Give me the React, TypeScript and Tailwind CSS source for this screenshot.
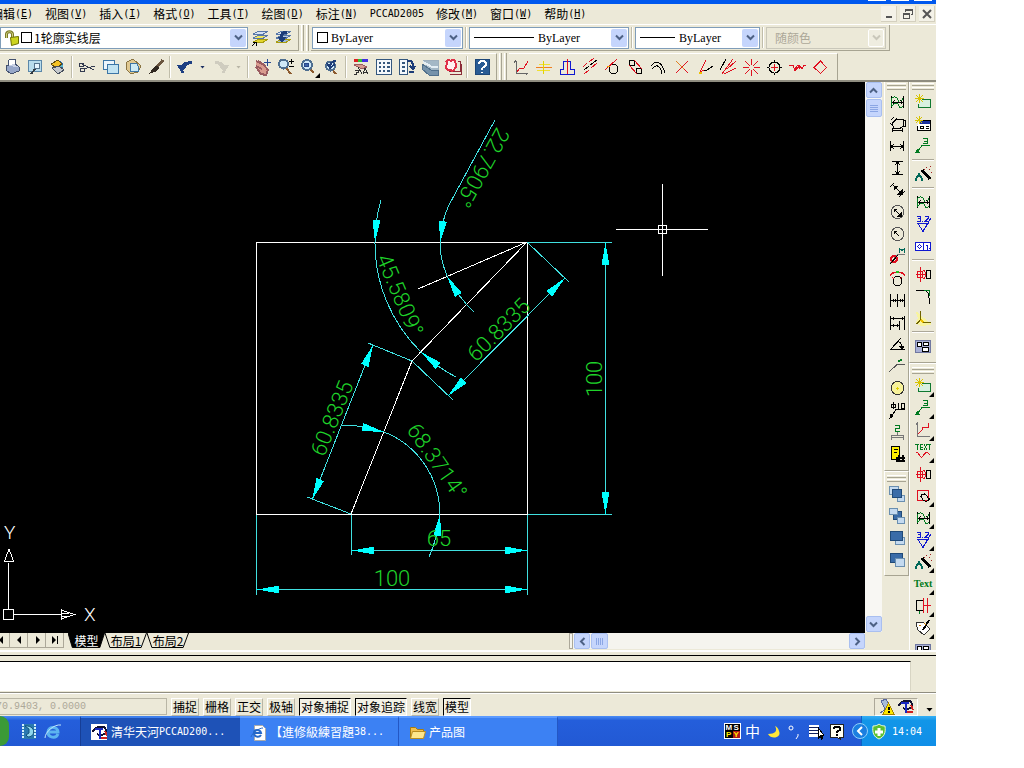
import { useState } from "react";
import type { ReactNode } from "react";

// one stroke or shape of a toolbar icon: path data, stroke, fill, stroke width
type Shape = [d: string, stroke: string, fill?: string, width?: number];

interface Tool {
    name: string;
    shapes: Shape[];
    flyout?: boolean;
}

const K = "#000000";
const R = "#e01020";
const G = "#007a20";
const B = "#1018d0";
const N = "#1c3c78";

const tool = (name: string, shapes: Shape[], flyout = false): Tool => ({ name, shapes, flyout });

const surfaceTol: Shape[] = [
    ["M3.500 3v12M15.500 3v12", K],
    ["M3.500 14V6c1-3 5-3 6 0s2 4 4 3l1-4M4 13c3-4 6-3 7 0s3 2 4 0", G],
    ["M4 9.500h11M6.500 7.500l-2 2 2 2M12.500 7.500l2 2-2 2", K],
];
const roughness: Shape[] = [["M3 8.500h11L9 16.500 4 8.500M9 16l8-13", B], ["M3 1.500h3v2h-2h2v3h-3M8.500 6v1M11 1.500h3v2l-3 3h3", B]];
const leader: Shape[] = [["M3 15l5-6.500h8", G], ["M9 1.500h4v5h-4M10 4h3", G, undefined, 1], ["M2 15l2-3 1 3z", G, G]];
const wand: Shape[] = [
    ["M8 5l8 9", K, undefined, 3],
    ["M5 8v3M5 9l-3 5M5 9l3 5M2 14v2M8 14v2", "#006858", undefined, 2],
    ["M12 2v1M15 4h1M16 1v1M10 4h1M17 7v1", "#a02020"],
];
const partBox: Shape[] = [
    ["M7.500 6.500h9v8h-12v-4", "#107830", "#d8f0e0"],
    ["M5.500 1v9M1 5.500h9M2 2l7 7M9 2l-7 7", "#d8c400"],
];
const hole: Shape[] = [["M2 9.500h9", R], ["M3.500 6.500h5v6h-5zM6.500 2v15", R], ["M9 5c3 0 3 9 0 9", R], ["M12.500 5.500h4v8h-4z", K]];
const layerIcon = (a: string, b: string): Shape[] => [
    ["M2 13l6-3h9l-6 4z", "#a89c10", a],
    ["M2 9l6-3h9l-6 4z", "#5878a8", b],
    ["M2 5l6-3h9l-6 4z", "#5878a8", "#d6e2f4"],
];
const viewport: Shape[] = [["M1.500 3.500h15v12h-15z", "#7078a0", "#a9b0d6"], ["M3.500 5.500h4v4h-4zM9.500 5.500h5v3h-5zM8.500 10.500h6v4h-6z", K, "#fff"]];

const fileTools = [
    tool("打印", [["M3 8l8-3 5 4-8 4z", "#44526f", "#c7d0e4"], ["M5 7l1-5 6-1 1 5", "#44526f", "#fff"], ["M3 8v4l5 4 8-3v-4", "#44526f", "#97a7c8"]]),
    tool("打印预览", [["M2.500 2.500h13v11h-13z", "#5b87a9", "#b9dcec"], ["M9 11l-4 5", "#303840", undefined, 2], ["M8 8a3 3 0 1 0 6 0a3 3 0 1 0-6 0", "#56748e", "#e6f5ff"]]),
    tool("发布", [["M8 3a5 5 0 1 1 2 10", "#2868a8", "#58b4cc"], ["M2 6l7-4 4 4-6 4z", "#5e4a10", "#f4c224"], ["M3 10l7-2 5 4-6 4z", "#444c5a", "#c4c8cc"]]),
];

const editTools = [
    tool("剪切", [["M17 8L5 11M16 12L4 6", "#333b50"], ["M1.500 5.500h4v3h-4zM2.500 10.500h4v3h-4z", "#333b50"]]),
    tool("复制", [["M2.500 2.500h11v9h-11z", "#3d76a6", "#edf6fc"], ["M6.500 6.500h11v9h-11z", "#3d76a6", "#c3e4f2"]]),
    tool("粘贴", [["M3 4l6-3 8 7-3 6-7 2-5-5z", "#8a7442", "#e0c890"], ["M6.500 5.500h6l2 3v5h-8z", "#3d76a6", "#cdeaf4"]]),
    tool("特性匹配", [["M16 2l-6 7", "#6b5640", undefined, 3], ["M10 8l-3 2-4 5 6-2 3-3z", "#302820", "#302820"]]),
];

const zoomTools = [
    tool("实时平移", [["M2 3l8 4 4 5-2 5-5-1-5-7M4 3l6 4M2 8l6 3", "#9a5c60", "#d99b8e", 2], ["M13.500 1v7M10 4.500h7", "#294a94"]]),
    tool("实时缩放", [["M9 10l5 6", "#8c5a2e", undefined, 2], ["M2 6a4 4 0 1 0 9 0a4 4 0 1 0-9 0", "#4e6e90", "#cfe8f8", 2], ["M14.500 1v5M12 3.500h5M12 8.500h5", K]]),
    tool("窗口缩放", [["M9 10l5 5", "#8c5a2e", undefined, 2], ["M2 7a5 5 0 1 0 10 0a5 5 0 1 0-10 0", "#4e6e90", "#cfe8f8", 2], ["M4.500 5.500h4v3h-4z", "#28488a", "#3c63a8"]], true),
    tool("缩放上一个", [["M8 10l5 6", "#8c5a2e", undefined, 2], ["M3 8a4 4 0 1 0 9 0a4 4 0 1 0-9 0", "#4e6e90", "#cfe8f8", 2], ["M7 11c-1-5 2-8 6-8M4 5l3 5 5-4", N, undefined, 2]]),
];

const paletteTools = [
    tool("对象特性", [["M2 2.500h4", "#e02020", undefined, 3], ["M6 2.500h4", "#30c030", undefined, 3], ["M10 2.500h6", "#4030e0", undefined, 3], ["M2 7l7-1 6 3-5 2z", "#9a5c60", "#d99b8e"], ["M3 12h3v2h-2v2h-2M11 16l2-6 3 6M12 14h3M6 9l4 7", "#303030"]]),
    tool("设计中心", [["M1.500 1.500h15v15h-15z", "#34577e", "#f4f8fc"], ["M4 5h2M4 9h2M4 13h2M8 5h2M8 9h2M8 13h2M12 5h3M12 9h3M12 13h3", "#34577e", undefined, 2]]),
    tool("工具选项板", [["M1.500 1.500h8v15h-8z", "#34577e", "#f4f8fc"], ["M4 5h3M4 9h3M4 13h3", "#34577e", undefined, 2], ["M9 3h3c3 0 3 3 3 7M12 8l3 3 2-3M11 14h5", N, undefined, 2]]),
    tool("图纸集", [["M2 2h15v13H9z", "#9dafbd", "#a4b8c6"], ["M1 6l9 6h7v5H8l-7-6z", "#50708c", "#7592aa"], ["M2 4l9 5h6", "#e4eef4", undefined, 2]]),
    tool("标记集", [["M14 3.500h2.500v10H5", "#8b2c38"], ["M17.500 6v10.500H6", "#8b2c38"], ["M2.500 3.500c2-3 4 0 5-1s4-1 4 2 2 3 0 5-1 4-4 3-4 1-5-2 1-3 0-7z", "#e03048", "#fff0f0", 2]]),
];

const helpTools = [
    tool("帮助", [["M2.500 1.500h14v15h-14z", "#1d4778", "#2a5c94"], ["M6 6c0-4 7-4 7 0 0 3-4 2-4 6M9 14v1", "#fff", undefined, 2]]),
];

const drawTools = [
    tool("坐标线", [["M4.500 3v12h11M2 5l2-3M16 15l-2 2", "#666"], ["M5 14l3-4h4l3-5v-2", R]]),
    tool("中心线", [["M4 6.500h11M2 12.500h13", "#f0e030"], ["M1 9.500h16", "#f08020"], ["M8.500 3v13", "#e4d400"]]),
    tool("对称线", [["M5.500 11V3.500h7V11h4v5.500h-14V11z", B], ["M9.500 1v15", R]]),
    tool("平行线", [["M2 9l4-4M8 4l5-4M3 16l5-4M10 10l6-5", R], ["M3 12l5-4M9 7l7-5", K]]),
    tool("切线", [["M5 11a4 4 0 1 0 9 0a4 4 0 1 0-9 0", K], ["M1 12L13 1", R], ["M3 8.500h3", "#f0a000"]]),
    tool("公切线", [["M2 5a3 3 0 1 0 6 0a3 3 0 1 0-6 0M9 13a3 3 0 1 0 6 0a3 3 0 1 0-6 0", K], ["M7 2l8 9M2 7l8 9", R]]),
    tool("圆弧", [["M1 8c5-7 11-4 14 7", K], ["M2 11c4-6 9-3 10 5", K]]),
    tool("剪断", [["M3 3l12 12", "#e08020"], ["M15 3L3 15M11 11l4 4", R]]),
    tool("角分线", [["M4 14L10 2", R], ["M4 14l4-2", R], ["M8 12h3l6-4", K], ["M3 15h3", "#f0c000", undefined, 2]]),
    tool("三分线", [["M1 12L7 1", K], ["M3 16L14 1M5 16l12-6M8 11L17 3", R]]),
    tool("星形线", [["M9.500 1v6M9.500 12v6M1 9.500h6M12 9.500h6M3 3l5 5M11 11l5 5M16 3l-5 5M8 11l-5 5", R]]),
    tool("圆孔", [["M4 9.500a5 5 0 1 0 11 0a5 5 0 1 0-11 0", K], ["M9.500 6v7M6 9.500h7", R], ["M9.500 2v2M9.500 15v2M2 9.500h2M15 9.500h2", K]]),
    tool("波浪线", [["M1 7.500h4l2 5 3-3h2", R], ["M7 11l3-4 2 4M11 7l3 4 2-3.500h2", R]]),
    tool("多边形", [["M9.500 3l6 6.500-6 6-6.500-6z", R]]),
];

const dimTools = [
    tool("智能标注", surfaceTol),
    tool("尺寸标注", [["M4.500 8l4-4 7 1v6l-3 2h-7z", K], ["M3 5l3-3M2 8l3 3M4.500 15.500h9M4.500 13v4M14.500 13v4M15.500 5.500h2M15.500 11.500h2M17.500 6v5", K]]),
    tool("线性标注", [["M2.500 4v10M15.500 4v10M3 9.500h12M6 7L3 9.500 6 12M12 7l3 2.500-3 2.500", K]]),
    tool("垂直标注", [["M4 2.500h11M4 15.500h11M9.500 3v12M7 6l2.500-3L12 6M7 12l2.500 3 2.500-3", K]]),
    tool("对齐标注", [["M5 4l9 9M2 6l4-4M11 16l6-6", K], ["M6 9V5h4zM14 9v4h-4z", K, K]]),
    tool("直径标注", [["M3 9a6 6 0 1 0 13 0a6 6 0 1 0-13 0", "#555"], ["M6 6l7 7", K], ["M6 9V6h3zM13 10v3h-3z", K, K]]),
    tool("半径标注", [["M3 9a6 6 0 1 0 13 0a6 6 0 1 0-13 0", "#555"], ["M6 6l5 5", K], ["M6 9V6h3z", K, K]]),
    tool("螺纹标注", [["M11.500 6V1.500l2.500 2 2.500-2v4.500", "#006858"], ["M2 16L10 7.500h7", "#777"], ["M3 12a3 3 0 1 0 6 0a3 3 0 1 0-6 0", R, undefined, 2], ["M2 17l8-9", K]]),
    tool("弧长标注", [["M5 12a4 4 0 1 0 9 0a4 4 0 1 0-9 0", K], ["M2 7c3-5 12-5 15 0M2 7l3-4M17 7l-3-4M4 8l2 2M14 8l-2 2", R], ["M8 3h3", "#20c020", undefined, 2]]),
    tool("连续标注", [["M2.500 3v13M9.500 3v13M16.500 3v13M2 9.500h15M5.500 8v3M7.500 8v3M12.500 8v3M14.500 8v3", K]]),
    tool("基线标注", [["M2.500 3v14M16.500 3v14M3 5.500h13M5.500 4v3M14.500 4v3M11.500 8v9M3 12.500h8M5.500 11v3M9.500 11v3", K]]),
    tool("角度标注", [["M2 14.500h15M3 14L13 3", K], ["M9 6c3 1 5 3 5 6", K], ["M11 11h5l-2 3z", K, K]]),
    tool("引线标注", [["M1 15L9 7.500h8", "#555"], ["M10 4l4-1", G, undefined, 2]]),
    tool("圆心标记", [["M3 9a6 6 0 1 0 13 0a6 6 0 1 0-13 0", "#333", "#f7f29a"], ["M8 9.500h3M9.500 8v3", "#e0d000"]]),
    tool("孔标注", [["M3 16l5-7.500h9", K], ["M3.500 3.500h4v3h-4zM5.500 1v7M10.500 2v6M13.500 2.500h3v5h-3z", K], ["M2 17l1-4 2 2z", K, K]]),
    tool("序号", [["M7 2.500h4.500v3h-4v3h4", G], ["M3.500 17v-4.500h12v4.500M9.500 9v3M3 14.500h13", "#777"]]),
    tool("明细表", [["M3.500 1.500h8v13h-8z", K, "#ffee00"], ["M6 4.500h4M6 7.500h3", K], ["M8 13h9M8 16h9M11 10v6M15 10v6", K, undefined, 2]]),
];

const orderTools = [
    tool("前置", [["M1.500 1.500h9v8h-9zM9.500 10.500h7v6h-7z", "#6a8fb0", "#c4daf0"], ["M4.500 4.500h9v8h-9z", "#204a78", "#3a6ca8"]]),
    tool("后置", [["M5.500 4.500h8v8h-8z", "#204a78", "#3a6ca8"], ["M1.500 1.500h8v6h-8zM9.500 10.500h7v6h-7z", "#6a8fb0", "#c4daf0"]]),
    tool("置于对象之上", [["M7.500 8.500h9v7h-9z", "#6a8fb0", "#c4daf0"], ["M2.500 2.500h12v9h-12z", "#204a78", "#3a6ca8"]]),
    tool("置于对象之下", [["M2.500 2.500h12v9h-12z", "#204a78", "#3a6ca8"], ["M7.500 7.500h9v8h-9z", "#6a8fb0", "#c4daf0"]]),
];

const partGroups: Tool[][] = [
    [
        tool("插入零件", partBox),
        tool("图纸标题", [["M5.500 5.500h11v10h-13v-5", K, "#fff"], ["M6 7.500h10", "#1830a0", undefined, 3], ["M6.500 11.500h3v2h-3zM12 11.500h3M12 13.500h3", K], ["M5.500 1v8M1 5.500h8M2 2l6 6M8 2l-6 6", "#d8c400"]]),
        tool("引出说明", leader),
    ],
    [tool("向导", wand)],
    [
        tool("公差", surfaceTol),
        tool("粗糙度", roughness),
        tool("形位公差", [["M1.500 5.500h15v8h-15zM9.500 5.500v8", B, "#fff"], ["M3.500 9.500l2-2 2 2-2 2zM12 8.500h1.500v4M15.500 11v1", B]]),
    ],
    [
        tool("孔轴", hole),
        tool("倒圆", [["M2 3.500h7c4 0 6 3 6 7v6", K], ["M10 3.500h5.500v5", G]]),
        tool("倒角", [["M3 3l2 6-2 5 4 2 10-1", "#f8f4a0", "#f8f4a0", 2], ["M6.500 2v9l-4 4M9 13.500h8", "#706400"], ["M6.500 11l3 2", "#f0c000", undefined, 2]]),
    ],
    [tool("视口", viewport)],
];

const drawGroup = [
    tool("零件库", partBox, true),
    tool("引线", leader, true),
    tool("曲线", [["M3.500 2v13.500h12M2 4l2-3", "#777"], ["M4 13l4-4v-2.500h6.500V2", R]], true),
    tool("文本样条", [["M1 1.500h4M3.500 1.500v5M6.500 1.500v5M6 1.500h3M6 4.500h3M6 6.500h3M10 1l3 6M13 1l-3 6M13 1.500h4M15.500 1.500v5", G], ["M2 10c3-2 4 7 7 3s3-5 7-1", R]], true),
    tool("孔", hole),
    tool("剪裁", [["M3.500 3.500h11v10h-11z", R], ["M8 9a4 4 0 1 0 8 2M6 10c3-5 7-4 9 4", K]], true),
    tool("曲面公差", surfaceTol, true),
    tool("表面粗糙度", roughness, true),
    tool("自动向导", wand, true),
];

const drawGroupTail = [
    tool("机构", [["M2.500 3.500h7v10h-7z", K], ["M9.500 1v15M13.500 1v15M9 8.500h8", R], ["M5.500 14v3", G]], true),
    tool("标记", [["M2 4l7-1 7 7-6 6-6-5z", "#333", "#fff"], ["M15 1l-6 10", K, undefined, 2], ["M5 6.500h2M10.500 4l1 2", "#d08000"]], true),
    tool("窗口视图", viewport, true),
];

const Icon = ({ shapes, size = 18 }: { shapes: Shape[]; size?: number }) => (
    <svg width={size} height={size} viewBox={`0 0 ${size} ${size}`} fill="none" shapeRendering="crispEdges" aria-hidden="true">
        {shapes.map(([d, stroke, fill, width], i) => (
            <path key={i} d={d} stroke={stroke} fill={fill ?? "none"} strokeWidth={width ?? 1} />
        ))}
    </svg>
);

const Flyout = () => <span className="absolute right-0 bottom-0 h-[5px] w-[5px] bg-black [clip-path:polygon(100%_0,100%_100%,0_100%)]" />;

const ToolButton = ({ item, tall = false }: { item: Tool; tall?: boolean }) => (
    <button
        aria-label={item.name}
        title={item.name}
        className={`relative flex h-[22px] shrink-0 items-center justify-center ${tall ? "w-[22px]" : "w-[23px]"}`}
    >
        <Icon shapes={item.shapes} />
        {item.flyout && <Flyout />}
    </button>
);

const Mono = ({ children }: { children: ReactNode }) => (
    <span className="font-['DejaVu_Sans_Mono',monospace] text-[10px]">{children}</span>
);

const Bar = () => (
    <span className="flex w-[6px] shrink-0 justify-center self-stretch py-[2px]">
        <span className="w-[2px] border-r border-l border-r-white border-l-[#c0bdaa]" />
    </span>
);

const Grip = () => (
    <span className="flex w-[12px] shrink-0 justify-center gap-[2px] self-stretch">
        <span className="w-[3px] border-r border-l border-r-[#a7a492] border-l-white" />
        <span className="w-[3px] border-r border-l border-r-[#a7a492] border-l-white" />
    </span>
);

const SideGrip = () => (
    <span className="flex h-[9px] shrink-0 flex-col justify-center gap-[1px] self-stretch px-[2px]">
        <span className="h-[3px] border-t border-b border-t-white border-b-[#a7a492]" />
        <span className="h-[3px] border-t border-b border-t-white border-b-[#a7a492]" />
    </span>
);

const SideRule = () => (
    <span className="flex h-[6px] shrink-0 flex-col justify-center self-stretch px-[2px]">
        <span className="h-[2px] border-t border-b border-t-[#aca899] border-b-white" />
    </span>
);

const Chevron = ({ className }: { className: string }) => (
    <svg viewBox="0 0 9 9" width="9" height="9" className={className} fill="none" aria-hidden="true">
        <path d="M1 2.500l3.500 3.500L8 2.500" stroke="currentColor" strokeWidth="2" />
    </svg>
);

function Combo({ label, options, width, lead, disabled }: { label: string; options: string[]; width: string; lead?: ReactNode; disabled?: boolean }) {
    return (
        <div className={`relative flex h-[22px] shrink-0 items-center gap-[2px] border pl-[4px] ${disabled ? "border-[#c9c7ba] bg-[#ece9d8]" : "border-[#7f9db9] bg-white"} ${width}`}>
            {lead}
            <select
                aria-label={label}
                disabled={disabled}
                className={`h-full min-w-0 flex-1 appearance-none bg-transparent text-[12px] outline-none ${disabled ? "text-[#aca899]" : ""} ${options[0] === "ByLayer" ? "font-['Liberation_Serif',serif]" : ""}`}
            >
                {options.map(o => <option key={o}>{o}</option>)}
            </select>
            <span className={`pointer-events-none mr-[1px] flex h-[18px] w-[16px] shrink-0 items-center justify-center rounded-[2px] ${disabled ? "border border-white bg-[#efede0] text-[#c9c7ba]" : "bg-[#c5d5fc] text-[#4d6185]"}`}>
                <Chevron className="" />
            </span>
        </div>
    );
}

const menus: [string, string][] = [
    ["编辑", "E"],
    ["视图", "V"],
    ["插入", "I"],
    ["格式", "O"],
    ["工具", "T"],
    ["绘图", "D"],
    ["标注", "N"],
    ["PCCAD2005", ""],
    ["修改", "M"],
    ["窗口", "W"],
    ["帮助", "H"],
];

function MenuBar() {
    return (
        <div className="flex h-[20px] shrink-0 items-center justify-between overflow-hidden">
            <nav className="-ml-[9px] flex gap-[12px]">
                {menus.map(([name, key]) => (
                    <button key={name} className="flex items-center whitespace-nowrap">
                        {key ? <span>{name}</span> : <Mono>{name}</Mono>}
                        {key && <Mono>(<u>{key}</u>)</Mono>}
                    </button>
                ))}
            </nav>
            <div className="flex gap-[3px] pr-[1px]">
                <button aria-label="最小化" className="flex h-[16px] w-[16px] items-end justify-center border-r border-b border-[#d4d0bf] bg-[#f4f2e8] pb-[3px]">
                    <span className="h-[2px] w-[6px] bg-[#555]" />
                </button>
                <button aria-label="还原" className="flex h-[16px] w-[16px] items-center justify-center border-r border-b border-[#d4d0bf] bg-[#f4f2e8]">
                    <svg width="10" height="10" fill="none" stroke="#555" shapeRendering="crispEdges"><path d="M2.500 3V0.500h7v5H8M2 1.500h7M0.500 4.500h6v5h-6zM1 5.500h6" /></svg>
                </button>
                <button aria-label="关闭" className="flex h-[16px] w-[16px] items-center justify-center border-r border-b border-[#d4d0bf] bg-[#f4f2e8]">
                    <svg width="10" height="10" fill="none" stroke="#555" strokeWidth="2"><path d="M1 1l8 8M9 1L1 9" /></svg>
                </button>
            </div>
        </div>
    );
}

function PropertyBar() {
    return (
        <div className="flex h-[27px] shrink-0 items-stretch border-t border-white">
            <div className="flex items-center border-r border-b border-[#a7a492] pr-[4px]">
                <Combo
                    label="图层"
                    options={["1轮廓实线层"]}
                    width="w-[248px]"
                    lead={
                        <>
                            <svg width="15" height="16" viewBox="0 0 15 16" fill="none" aria-hidden="true">
                                <path d="M1.500 8V4C2 1 7 1 7.500 4V7" stroke="#7d7c28" strokeWidth="3" />
                                <path d="M1.500 8V4C2 1 7 1 7.500 4V7" stroke="#d0d080" />
                                <path d="M5.500 7.500l8-1v7l-7 2z" stroke="#6d7000" fill="#cdd420" />
                            </svg>
                            <span className="-ml-[1px] h-[11px] w-[11px] border border-black" />
                        </>
                    }
                />
                <ToolButton item={tool("图层特性管理器", [...layerIcon("#e4d62c", "#f0e860"), ["M1 17l4-4M2 13.500h3v3", K]])} />
                <ToolButton item={tool("上一个图层", [...layerIcon("#9cb8d8", "#b8cce4"), ["M8 11c-2-5 0-8 5-8", N, undefined, 3], ["M4 8h8l-4 5z", N, N]])} />
            </div>
            <Grip />
            <div className="flex flex-1 items-center">
                <div className="flex h-full items-center border-r border-b border-[#a7a492] pr-[3px] pl-[1px]">
                    <Combo label="颜色" options={["ByLayer"]} width="w-[151px]" lead={<span className="mr-[1px] h-[11px] w-[11px] border border-black" />} />
                    <Bar />
                    <Combo label="线型" options={["ByLayer"]} width="w-[160px]" lead={<span className="mr-[2px] h-px w-[60px] bg-black" />} />
                    <Bar />
                    <Combo label="线宽" options={["ByLayer"]} width="w-[125px]" lead={<span className="mr-[2px] h-px w-[35px] bg-black" />} />
                    <Bar />
                    <Combo label="打印样式" options={["随颜色"]} width="w-[120px]" disabled lead={<span className="w-[2px]" />} />
                </div>
            </div>
        </div>
    );
}

function StandardBar() {
    return (
        <div className="flex h-[31px] shrink-0 items-stretch overflow-hidden border-b-2 border-b-[#8f8d80] pt-[2px]">
            <div className="flex items-center border-t border-r border-t-white border-r-[#a7a492] pr-[3px]">
                {fileTools.map(t => <ToolButton key={t.name} item={t} />)}
                <Bar />
                {editTools.map(t => <ToolButton key={t.name} item={t} />)}
                <Bar />
                <ToolButton item={tool("放弃", [["M7 15c-4-6 1-11 9-10", "#1d3f82", undefined, 3], ["M1 7h10l-5 6z", "#1d3f82", "#1d3f82"]])} />
                <button aria-label="放弃列表" className="flex w-[13px] justify-center"><span className="h-[3px] w-[5px] bg-[#1d2f62] [clip-path:polygon(0_0,100%_0,50%_100%)]" /></button>
                <ToolButton item={tool("重做", [["M11 15c4-6-1-11-8-10", "#cfccbf", undefined, 3], ["M17 7h-10l5 6z", "#cfccbf", "#cfccbf"]])} />
                <button aria-label="重做列表" className="flex w-[13px] justify-center"><span className="h-[3px] w-[5px] bg-[#b8b5a6] [clip-path:polygon(0_0,100%_0,50%_100%)]" /></button>
                <Bar />
                {zoomTools.map(t => <ToolButton key={t.name} item={t} />)}
                <Bar />
                {paletteTools.map(t => <ToolButton key={t.name} item={t} />)}
                <Bar />
                {helpTools.map(t => <ToolButton key={t.name} item={t} />)}
            </div>
            <Grip />
            <div className="flex items-center border-t border-r border-t-white border-r-[#a7a492] pr-[6px]">
                {drawTools.map(t => <ToolButton key={t.name} item={t} />)}
            </div>
        </div>
    );
}

// arrowhead pointing along +x, turned to the given angle
const Arrow = ({ x, y, a }: { x: number; y: number; a: number }) => (
    <path d="M0 0L-22 -4V4z" fill="#00ffff" transform={`translate(${x} ${y}) rotate(${a})`} />
);

const Dim = ({ x, y, a = 0, start = false, children }: { x: number; y: number; a?: number; start?: boolean; children: ReactNode }) => (
    <text transform={`translate(${x} ${y}) rotate(${a})`} textAnchor={start ? "start" : "middle"} fill="#1fd32a" fontSize="22" fontWeight="300" fontFamily="Roboto, sans-serif">
        {children}
    </text>
);

function Drawing() {
    return (
        <svg className="block h-full w-full bg-black" role="img" aria-label="图形" shapeRendering="crispEdges">
            <g transform="translate(0 -82)" fill="none">
                <g stroke="#ffffff">
                    <path d="M256.500 242.500H527.500V514.500H256.500z" />
                    <path d="M527 242L412 361L351 514M527 242L418 289" />
                    <path d="M616 229.500H708M662.500 184V276M658.500 225.500h8v8h-8z" />
                    <path d="M3.500 609.500h10v10h-10zM14 614.500H61M8.500 563V609" />
                    <path d="M61.500 610v9l13-4.500zM4.500 561h9l-4.500-12zM61 613h8M61 616h8" />
                </g>
                <g stroke="#40e0e0">
                    <path d="M528 242.500H612M528 514.500H612M605.500 243V514" />
                    <path d="M256.500 515V595M527.500 515V595M257 589.500H527" />
                    <path d="M351.500 515V555M352 550.500H527" />
                    <path d="M351 514L307 497M412 361L368 343M312 500L373 345" />
                    <path d="M412 361L453 400M527 242L569 282M448 396L565 278" />
                    <path d="M342 425Q364 425 384 432A88 88 0 0 1 440 514Q437 540 429 557" />
                    <path d="M381 200Q375 221 375 242A152 152 0 0 0 421 352Q438 368 456 377" />
                    <path d="M495 120L449 205Q441 222 440 242A87 87 0 0 0 447 276Q458 297 474 312" />
                </g>
                <Arrow x={605.5} y={243} a={-90} />
                <Arrow x={605.5} y={514} a={90} />
                <Arrow x={257} y={589.5} a={180} />
                <Arrow x={527} y={589.5} a={0} />
                <Arrow x={352} y={550.5} a={180} />
                <Arrow x={527} y={550.5} a={0} />
                <Arrow x={312} y={500} a={112} />
                <Arrow x={373} y={345} a={-68} />
                <Arrow x={448} y={396} a={135} />
                <Arrow x={565} y={278} a={-45} />
                <Arrow x={384} y={432} a={13} />
                <Arrow x={440} y={514} a={-83} />
                <Arrow x={375} y={242} a={94} />
                <Arrow x={421} y={352} a={-141} />
                <Arrow x={440} y={243} a={98} />
                <Arrow x={447} y={276} a={-121} />
                <Dim x={497} y={126} a={119} start>22.7905°</Dim>
                <Dim x={376} y={258} a={67} start>45.5809°</Dim>
                <Dim x={406} y={430} a={55} start>68.3714°</Dim>
                <Dim x={339} y={421} a={-68}>60.8335</Dim>
                <Dim x={504} y={335} a={-45}>60.8335</Dim>
                <Dim x={602} y={379} a={-90}>100</Dim>
                <Dim x={439} y={546}>65</Dim>
                <Dim x={392} y={586}>100</Dim>
                <g fill="#ffffff" fontSize="19" fontWeight="300" fontFamily="Roboto, sans-serif">
                    <text x="84" y="621">X</text>
                    <text x="4" y="539">Y</text>
                </g>
            </g>
        </svg>
    );
}

const ScrollButton = ({ label, turn }: { label: string; turn: string }) => (
    <button aria-label={label} className="flex h-[16px] w-[16px] shrink-0 items-center justify-center rounded-[2px] border border-[#a9bff0] bg-[#c5d5fc] text-[#4d6185]">
        <Chevron className={turn} />
    </button>
);

function SheetTabs() {
    const [active, setActive] = useState("模型");
    return (
        <div className="flex h-[17px] shrink-0 items-start">
            <div className="flex h-[15px] w-[64px]">
                {["M3 1v8L-1 5z", "M7 1v8L3 5z", "M4 1v8l4-4z", "M2 1v8l4-4zM7 1h1v8H7z"].map((d, i) => (
                    <button key={d} aria-label={["第一页", "上一页", "下一页", "最后一页"][i]} className={`flex items-center justify-center border-r border-b border-[#aca899] ${i === 0 ? "w-[10px]" : "w-[18px]"}`}>
                        <svg width="10" height="10"><path d={d} /></svg>
                    </button>
                ))}
            </div>
            <div role="tablist" className="ml-[4px] flex">
                {["模型", "布局1", "布局2"].map(name => (
                    <button
                        key={name}
                        role="tab"
                        aria-selected={active === name}
                        onClick={() => setActive(name)}
                        className={`relative flex h-[15px] items-center justify-center text-[12px] leading-[15px] ${name === "模型" ? "w-[37px]" : "w-[42px]"} ${active === name ? "text-white" : "text-black"}`}
                    >
                        <svg className="absolute inset-0 h-full w-full" viewBox="0 0 43 15" preserveAspectRatio="none" aria-hidden="true">
                            <path d="M0 0l5 14.500h32L42.500 0" stroke="#000" fill={active === name ? "#000" : "#ece9d8"} />
                        </svg>
                        <span className="relative">{name}</span>
                    </button>
                ))}
            </div>
            <div className="ml-auto flex h-[16px] w-[296px] bg-[#f5f4ee]">
                <span className="mr-[1px] w-[4px] border border-[#aca899]" />
                <ScrollButton label="向左滚动" turn="rotate-90" />
                <span className="ml-[1px] flex w-[17px] items-center justify-center gap-[1px] rounded-[2px] border border-[#a9bff0] bg-[#c5d5fc]">
                    {[0, 1, 2, 3].map(i => <span key={i} className="h-[7px] w-px bg-[#8ba6e4]" />)}
                </span>
                <span className="flex-1" />
                <ScrollButton label="向右滚动" turn="-rotate-90" />
            </div>
        </div>
    );
}

function SideBars() {
    return (
        <>
            <div className="flex w-[25px] shrink-0 flex-col">
                <div className="flex flex-col items-center border-r border-b border-l border-r-[#a7a492] border-b-[#a7a492] border-l-white pb-[5px]">
                    <SideGrip />
                    {dimTools.map(t => <ToolButton key={t.name} item={t} tall />)}
                </div>
                <div className="flex flex-col items-center border-t border-r border-b border-l border-t-white border-r-[#a7a492] border-b-[#a7a492] border-l-white pt-[2px] pb-[4px]">
                    <SideGrip />
                    {orderTools.map(t => <ToolButton key={t.name} item={t} tall />)}
                </div>
            </div>
            <div className="flex w-[27px] shrink-0 flex-col overflow-hidden">
                <div className="flex flex-col items-center border-b border-l border-b-[#a7a492] border-l-white pb-[5px]">
                    <SideGrip />
                    {partGroups.map((group, i) => (
                        <div key={i} className="flex flex-col items-center self-stretch">
                            {i > 0 && <SideRule />}
                            {group.map(t => <ToolButton key={t.name} item={t} tall />)}
                        </div>
                    ))}
                </div>
                <div className="flex flex-col items-center border-t border-l border-white pt-[2px]">
                    <SideGrip />
                    {drawGroup.map(t => <ToolButton key={t.name} item={t} tall />)}
                    <button className="relative flex h-[22px] w-[22px] items-center justify-center font-['Liberation_Serif',serif] text-[10px] font-bold text-[#007a20]">
                        Text
                        <Flyout />
                    </button>
                    {drawGroupTail.map(t => <ToolButton key={t.name} item={t} tall />)}
                </div>
            </div>
        </>
    );
}

const modes = [
    { name: "捕捉", on: false },
    { name: "栅格", on: false },
    { name: "正交", on: false },
    { name: "极轴", on: false },
    { name: "对象捕捉", on: true },
    { name: "对象追踪", on: true },
    { name: "线宽", on: false },
    { name: "模型", on: true },
];

const pccad: Shape[] = [["M2 8c1-6 12-7 13-2s-6 6-9 4", "#101030", undefined, 2], ["M4 5h8M9 5v10", "#1828c0", undefined, 2], ["M10 14h6M14 7l2 5", "#d02020", undefined, 2]];

function StatusBar() {
    return (
        <div className="flex h-[23px] shrink-0 items-center gap-[4px] overflow-hidden border-t border-white pt-[3px]">
            <span className="flex h-[17px] w-[167px] items-center overflow-hidden border border-l-0 border-[#b9b6a5] font-['Liberation_Mono',monospace] text-[10px] whitespace-pre text-[#aca899]">
                <span className="-ml-[4px]">70.9403, 0.0000</span>
            </span>
            {modes.map(m => (
                <button
                    key={m.name}
                    aria-pressed={m.on}
                    className={`flex h-[18px] shrink-0 items-center justify-center border text-[12px] ${m.name.length > 2 ? "w-[52px]" : "w-[28px]"} ${m.on ? "border-t-black border-r-white border-b-white border-l-black bg-[#f3f1e6]" : "border-t-white border-r-[#b9b6a5] border-b-[#b9b6a5] border-l-white"}`}
                >
                    {m.name}
                </button>
            ))}
            <div className="ml-auto flex h-[18px] items-center gap-[2px] border border-t-[#aca899] border-r-white border-b-white border-l-[#aca899] px-[3px]">
                <Icon size={17} shapes={[["M3 3l5-2 3 6-4 4zM2 15l7-5", "#5868a0", "#a8bcd8"], ["M10.500 5L16 16H5z", "#a88400", "#ffe800"], ["M11 9v3M11 13v2", K, undefined, 2]]} />
                <Icon size={17} shapes={pccad} />
            </div>
            <button aria-label="状态栏菜单" className="mr-[3px] ml-[4px] flex h-[18px] items-end pb-[4px]">
                <span className="h-[4px] w-[7px] bg-black [clip-path:polygon(0_0,100%_0,50%_100%)]" />
            </button>
        </div>
    );
}

function TaskBar() {
    return (
        <div className="flex h-[30px] shrink-0 items-stretch overflow-hidden bg-linear-to-b from-[#4b8df5] via-[#245edb] via-15% to-[#2259d4] text-[12px] text-white">
            <button aria-label="开始" className="w-[9px] rounded-r-[10px] bg-[#3b9a36]" />
            <div className="flex w-[71px] items-center gap-[7px] pl-[12px]">
                <button aria-label="媒体播放机">
                    <svg width="16" height="17" viewBox="0 0 16 17" fill="none" aria-hidden="true">
                        <path d="M1 1h14v15H1z" fill="#2a78b0" />
                        <path d="M2 1v15M14 1v15" stroke="#d4f0fa" strokeWidth="2" strokeDasharray="2 1" />
                        <path d="M4 3c11-1 11 11 3 11l-2-2 3-2V6z" fill="#8fd6ee" stroke="#14547c" />
                    </svg>
                </button>
                <button aria-label="Internet Explorer">
                    <svg width="18" height="17" viewBox="0 0 18 17" fill="none" aria-hidden="true">
                        <path d="M14 11c-2 5-10 4-10-2s10-6 10 0H5" stroke="#5cb4f0" strokeWidth="3" />
                        <path d="M1 15C1 9 10 1 17 2" stroke="#c4e8fc" strokeWidth="1" />
                    </svg>
                </button>
            </div>
            <button className="flex w-[160px] items-center gap-[4px] border-t-2 border-l border-t-[#3f80ec] border-l-[#163e96] bg-[#1e52b7] pl-[10px]">
                <span className="bg-white"><Icon size={16} shapes={pccad} /></span>
                <span className="flex items-center">清华天河<Mono>PCCAD200...</Mono></span>
            </button>
            <button className="flex w-[159px] items-center gap-[3px] border-t-2 border-r border-t-[#5d9bff] border-r-[#2357c4] bg-[#3c81f3] pl-[10px]">
                <svg width="17" height="17" viewBox="0 0 17 17" fill="none" aria-hidden="true">
                    <path d="M4.500 1.500h8l3 3v12h-11z" stroke="#aaa" fill="#fff" />
                    <path d="M11 11c-2 3-7 2-7-2s6-4 7 0H4" stroke="#2668c8" strokeWidth="2" />
                    <path d="M1 13c1-4 8-9 12-9" stroke="#2668c8" />
                </svg>
                <span className="flex items-center">【進修級練習題<Mono>38...</Mono></span>
            </button>
            <button className="flex w-[159px] items-center gap-[3px] border-t-2 border-r border-t-[#5d9bff] border-r-[#2357c4] bg-[#3c81f3] pl-[10px]">
                <svg width="17" height="17" viewBox="0 0 17 17" fill="none" aria-hidden="true">
                    <path d="M1.500 14V3.500h5l2 2h6V14z" stroke="#a87c10" fill="#f0c050" />
                    <path d="M1.500 14.500l2-7h13l-2 7z" stroke="#b88c20" fill="#fde68c" />
                </svg>
                <span>产品图</span>
            </button>
            <div className="ml-auto flex items-center gap-[4px] pr-[7px]">
                <span className="grid h-[16px] w-[17px] grid-cols-2 border border-white bg-black text-center font-['Liberation_Sans',sans-serif] text-[8px] leading-[7px] font-bold">
                    <span>M</span>
                    <span>S</span>
                    <span className="text-[#ffe800]">P</span>
                    <span className="bg-[#b01818] text-[#ffe800]">Y</span>
                </span>
                <span className="w-[16px] text-[15px]">中</span>
                <svg width="17" height="17" viewBox="0 0 17 17" aria-hidden="true"><path d="M10 3c3 5 0 8-7 8 3 6 14 4 11-3-1-3-2-4-4-5z" fill="#ffe838" /></svg>
                <svg width="17" height="17" viewBox="0 0 17 17" fill="none" stroke="#fff" aria-hidden="true"><path d="M3 5a2 2 0 1 0 4 0a2 2 0 1 0-4 0M12 11v2l-2 3" /></svg>
                <Icon size={17} shapes={[["M2 3.500h10M2 6.500h10M2 9.500h10M2 12.500h10", "#fff", undefined, 3], ["M2 4.500h10M2 7.500h10M2 10.500h10", "#102060"], ["M11.500 5v10l2-2 1 3 1-1-1-3h2z", K, "#fff"]]} />
                <Icon size={17} shapes={[["M2.500 1.500h13v13h-4l1 2-3-2h-7z", "#222", "#fffff0"], ["M6 6c0-3 6-3 6 0s-3 1-3 4M9 11v2", K, undefined, 2]]} />
            </div>
            <button aria-label="显示隐藏的图标" className="z-10 -mr-[7px] self-center rounded-full border border-[#8fd0fa] bg-[#1b7fe0]">
                <svg width="14" height="14" fill="none"><path d="M9 3L5 7l4 4" stroke="#fff" strokeWidth="2" /></svg>
            </button>
            <div className="flex w-[75px] items-center gap-[5px] border-l border-[#0c62c4] bg-linear-to-b from-[#35b0f5] via-[#1296e8] via-15% to-[#0f8ee8] pl-[8px]">
                <svg width="17" height="17" viewBox="0 0 17 17" fill="none" aria-hidden="true">
                    <path d="M3 3c3 0 5-1 6-2 1 1 3 2 6 2 1 7-1 11-6 13C4 14 2 10 3 3z" stroke="#e8f8d8" fill="#5cc030" />
                    <path d="M9 5v8M5 9h8" stroke="#fff" strokeWidth="3" />
                </svg>
                <time><Mono>14:04</Mono></time>
            </div>
        </div>
    );
}

export default function App() {
    const [command, setCommand] = useState("");

    return (
        <div className="flex h-screen flex-col bg-white pr-[88px] pb-[22px] font-['Noto_Sans_CJK_SC',sans-serif] text-[12px] leading-[16px] text-black">
            <div className="flex min-h-0 flex-1 flex-col bg-[#ece9d8]">
                <div className="flex h-[4px] shrink-0 items-start justify-end gap-[5px] bg-[#0058ee] pr-[4px]">
                    <span className="h-px w-[18px] bg-white" />
                    <span className="h-px w-[18px] bg-white" />
                    <span className="h-px w-[18px] bg-white" />
                </div>
                <MenuBar />
                <PropertyBar />
                <StandardBar />

                <div className="flex min-h-0 flex-1 overflow-hidden">
                    <div className="flex min-w-0 flex-1 flex-col">
                        <div className="min-h-0 flex-1"><Drawing /></div>
                        <SheetTabs />
                    </div>
                    <div className="mr-[2px] flex w-[17px] shrink-0 flex-col items-center bg-[#f8f7f3]">
                        <ScrollButton label="向上滚动" turn="rotate-180" />
                        <span className="mt-[1px] flex h-[18px] w-[16px] flex-col items-center justify-center gap-[1px] rounded-[2px] border border-[#a9bff0] bg-[#c5d5fc]">
                            {[0, 1, 2, 3].map(i => <span key={i} className="h-px w-[8px] bg-[#8ba6e4]" />)}
                        </span>
                        <span className="flex-1" />
                        <ScrollButton label="向下滚动" turn="" />
                        <span className="h-[18px] self-stretch bg-[#ece9d8]" />
                    </div>
                    <SideBars />
                </div>

                {/* Command line */}
                <div className="shrink-0 border-t-2 border-white pt-[3px]">
                    <div className="flex border-t border-black pt-[5px]">
                        <input
                            aria-label="命令行"
                            value={command}
                            onChange={(e) => setCommand(e.target.value)}
                            className="h-[30px] min-w-0 flex-1 border-t border-r border-t-black border-r-[#d8d5c4] bg-white px-[4px] outline-none"
                        />
                        <span className="w-[25px]" />
                    </div>
                    <div className="h-[2px] border-b border-[#8f8d80]" />
                </div>

                <StatusBar />
                <TaskBar />
            </div>
        </div>
    );
}
